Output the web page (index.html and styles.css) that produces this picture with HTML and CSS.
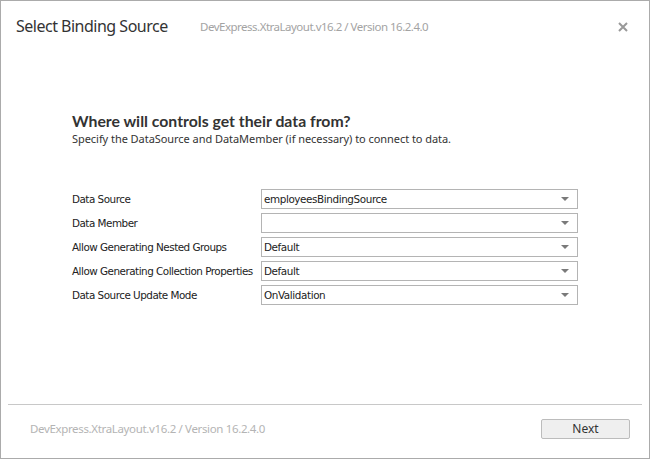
FILE: index.html
```html
<!DOCTYPE html>
<html>
<head>
<meta charset="utf-8">
<link rel="stylesheet" href="styles.css">
</head>
<body>
<div class="window">
  <div class="header">
    <span class="title">Select Binding Source</span>
    <span class="version">DevExpress.XtraLayout.v16.2 / Version 16.2.4.0</span>
    <span class="close">
      <svg width="10" height="10" viewBox="0 0 10 10"><path d="M1 1L9 9M9 1L1 9" stroke="#999999" stroke-width="2"/></svg>
    </span>
  </div>
  <div class="content">
    <div class="heading">Where will controls get their data from?</div>
    <div class="subheading">Specify the DataSource and DataMember (if necessary) to connect to data.</div>
    <div class="form">
      <div class="label">Data Source</div>
      <div class="combo"><span class="value">employeesBindingSource</span><span class="arrow"></span></div>
      <div class="label">Data Member</div>
      <div class="combo"><span class="value"></span><span class="arrow"></span></div>
      <div class="label">Allow Generating Nested Groups</div>
      <div class="combo"><span class="value">Default</span><span class="arrow"></span></div>
      <div class="label">Allow Generating Collection Properties</div>
      <div class="combo"><span class="value">Default</span><span class="arrow"></span></div>
      <div class="label">Data Source Update Mode</div>
      <div class="combo"><span class="value">OnValidation</span><span class="arrow"></span></div>
    </div>
  </div>
  <div class="footer">
    <span class="footer-version">DevExpress.XtraLayout.v16.2 / Version 16.2.4.0</span>
    <button class="next">Next</button>
  </div>
</div>
</body>
</html>
```
FILE: styles.css
```css
html, body {
  margin: 0;
  padding: 0;
  background: #ffffff;
}
.window {
  width: 650px;
  height: 459px;
  box-sizing: border-box;
  border: 1px solid #ababab;
  display: flex;
  flex-direction: column;
  background: #ffffff;
  font-family: "Noto Sans", sans-serif;
}
.header {
  height: 52px;
  display: flex;
  align-items: flex-start;
  padding: 13px 0 0 15px;
  box-sizing: border-box;
}
.title {
  font-size: 16px;
  color: #333333;
  line-height: 24px;
  width: 184px;
  letter-spacing: -0.5px;
}
.version {
  font-size: 11.5px;
  color: #a3a3a3;
  line-height: 24px;
  margin-top: 1px;
  letter-spacing: -0.5px;
  flex: 1;
}
.close {
  width: 10px;
  height: 10px;
  margin: 8px 21px 0 0;
  display: flex;
}
.content {
  flex: 1;
  padding: 59px 0 0 71px;
}
.heading {
  font-family: "Lato", sans-serif;
  font-size: 15.8px;
  font-weight: bold;
  color: #333333;
  line-height: 18px;
}
.subheading {
  font-size: 11px;
  color: #333333;
  line-height: 15px;
  margin-top: 1px;
  letter-spacing: -0.05px;
}
.form {
  margin-top: 43px;
  display: grid;
  grid-template-columns: 189px 317px;
  grid-auto-rows: 20px;
  row-gap: 4px;
  font-family: "DejaVu Sans", sans-serif;
  font-size: 10.4px;
  color: #222222;
}
.label {
  display: flex;
  align-items: center;
  white-space: nowrap;
  letter-spacing: -0.5px;
}
.combo {
  border: 1px solid #b4b4b4;
  box-sizing: border-box;
  display: flex;
  align-items: center;
  padding: 0 0 0 2px;
  letter-spacing: -0.4px;
}
.value {
  flex: 1;
}
.arrow {
  width: 0;
  height: 0;
  border-left: 4px solid transparent;
  border-right: 4px solid transparent;
  border-top: 4px solid #7a7a7a;
  margin-right: 8px;
}
.footer {
  height: 54px;
  margin: 0 7px;
  border-top: 1px solid #c8c8c8;
  display: flex;
  align-items: center;
  padding: 0 12px 0 22px;
  box-sizing: border-box;
}
.footer-version {
  flex: 1;
  font-size: 11.5px;
  color: #b4b4b4;
  letter-spacing: -0.35px;
  margin-top: -6px;
}
.next {
  width: 89px;
  height: 20px;
  background: #efefef;
  border: 1px solid #bcbcbc;
  border-radius: 2px;
  font-family: "Noto Sans", sans-serif;
  font-size: 12px;
  color: #333333;
  padding: 0;
  margin-top: -6px;
}
```
